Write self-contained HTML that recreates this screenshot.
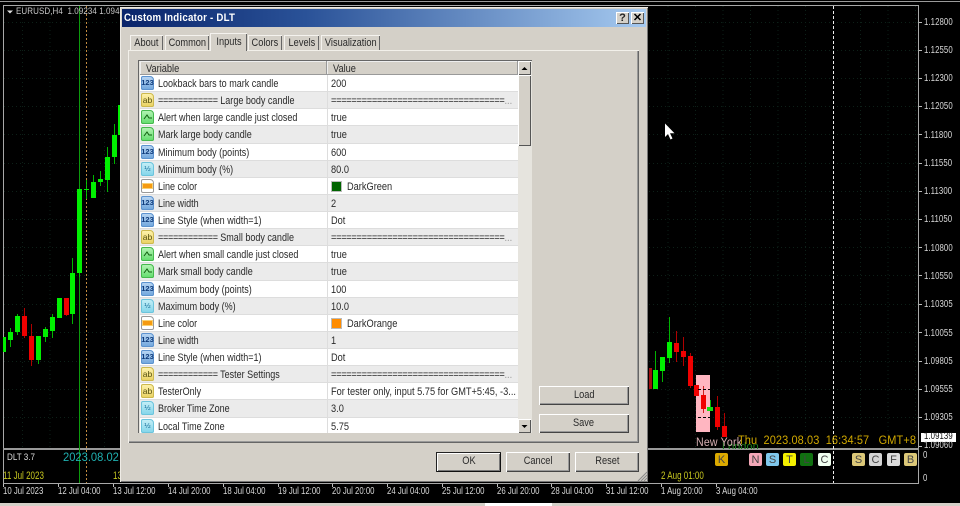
<!DOCTYPE html>
<html><head><meta charset="utf-8"><title>Custom Indicator - DLT</title>
<style>
html,body{margin:0;padding:0;background:#000}
body{width:960px;height:506px;position:relative;overflow:hidden;font-family:"Liberation Sans",sans-serif;font-size:11px;color:#222;filter:blur(.35px)}
.a{position:absolute;white-space:nowrap}
.l{transform-origin:0 50%}
.ax{position:absolute;left:924px;margin-top:1px;color:#d8d8d8;font-size:10px;line-height:10px;letter-spacing:.1px;transform:scaleX(.78);transform-origin:0 50%;white-space:nowrap}
.dt{position:absolute;top:487px;color:#d8d8d8;font-size:10px;line-height:10px;white-space:nowrap;transform:scaleX(.78);transform-origin:0 50%}
.y{position:absolute;color:#c8c820;font-size:11px;line-height:11px;white-space:nowrap;transform:scaleX(.73);transform-origin:0 50%}
.bt{position:absolute;top:453px;width:13px;height:13px;text-align:center;font-size:11px;line-height:14px;color:#444;border-radius:2px}
#dlg{position:absolute;left:120px;top:7px;width:528px;height:475px;background:#d4d0c8;box-shadow:inset 1px 1px 0 #efece6,inset -1px -1px 0 #777}
#tb{position:absolute;left:122px;top:9px;width:524px;height:18px;background:linear-gradient(90deg,#0a246a 0,#2a5298 35%,#a6caf0 100%)}
#tb b{position:absolute;left:2px;top:2px;color:#fff;font-size:11px;line-height:14px;letter-spacing:.25px;transform:scaleX(.88);transform-origin:0 50%;white-space:nowrap}
.cb{position:absolute;top:12px;width:13px;height:12px;background:#d4d0c8;box-shadow:inset 1px 1px 0 #fff,inset -1px -1px 0 #555;text-align:center;font:bold 11px/12px "Liberation Sans",sans-serif;color:#000}
.tab,.btn{display:flex;justify-content:center;white-space:nowrap}
.x{display:block;transform:scaleX(.84);flex:none}
.tab{position:absolute;top:35px;height:15px;background:#d4d0c8;box-shadow:inset 1px 1px 0 #f4f2ee,inset -1px 0 0 #666;line-height:17px;color:#2a2a2a;font-size:11px}
#panel{position:absolute;left:128px;top:50px;width:511px;height:393px;background:#d4d0c8;box-shadow:inset 1px 1px 0 #f2f0ea,inset -1px -1px 0 #666,inset -2px -2px 0 #999}
#list{position:absolute;left:138px;top:60px;width:394px;height:373px;background:#e6e4de;box-shadow:inset 1px 1px 0 #666;overflow:hidden}
.hd{position:absolute;top:1px;height:14px;background:#d4d0c8;box-shadow:inset -1px -1px 0 #999,inset 1px 1px 0 #eee;line-height:16px;color:#2a2a2a;font-size:11px;white-space:nowrap}
.hd span{display:block;transform:scaleX(.84);transform-origin:0 50%}
#rows{position:absolute;left:2px;top:15px;width:378px}
.r{position:relative;height:17.14px;line-height:19px;background:#fff;box-shadow:inset 0 -1px 0 #ddd;white-space:nowrap;overflow:hidden}
.r.g{background:#ebebeb}
.r s{text-decoration:none;position:absolute;left:18px;top:0;color:#2a2a2a;transform:scaleX(.82);transform-origin:0 50%}
.r u{text-decoration:none;position:absolute;left:191px;top:0;color:#2a2a2a;transform:scaleX(.84);transform-origin:0 50%}
.r i{position:absolute;left:187px;top:0;width:1px;height:17px;background:#ddd}
.e{letter-spacing:-.35px}
.d{color:#999;letter-spacing:0}
.sw{position:absolute;left:191px;top:3px;width:11px;height:11px;box-shadow:0 0 0 1px #bbb inset}
.ic{position:absolute;left:1px;top:1px;width:13px;height:14px;border-radius:2px 4px 2px 2px;font-size:7.5px;line-height:14px;text-align:center;font-weight:bold}
.n{background:linear-gradient(#bcd8f4,#6ea4dc);color:#103c7c;box-shadow:inset 0 0 0 1px #5d93cf}
.h{background:linear-gradient(#c8f0f8,#80d4ea);color:#1a6f9a;box-shadow:inset 0 0 0 1px #6cc4dc;font-weight:normal}
.t{background:linear-gradient(#fff4b0,#e8d060);color:#555010;box-shadow:inset 0 0 0 1px #cdb94f;font-size:8.5px;font-weight:normal}
.b{background:linear-gradient(#b8f5b8,#5fdc6a);box-shadow:inset 0 0 0 1px #46b84e}
.c{background:#fff;box-shadow:inset 0 0 0 1px #999}
.c:after{content:"";position:absolute;left:2px;top:5px;width:9px;height:4px;background:#f59a10;box-shadow:0 0 0 1px #f8d070}
.b svg{position:absolute;left:0;top:0}
.sb{position:absolute;left:518px;width:13px;background:#d4d0c8;box-shadow:inset 1px 1px 0 #fff,inset -1px -1px 0 #555}
.btn{position:absolute;background:#d4d0c8;box-shadow:inset 1px 1px 0 #fff,inset -1px -1px 0 #444,inset -2px -2px 0 #999;color:#2a2a2a;font-size:11px}
</style></head><body>

<svg class="a" style="left:0;top:0" width="960" height="506" viewBox="0 0 960 506">
<rect width="960" height="506" fill="#000"/>
<rect x="0" y="1" width="960" height="1" fill="#9a9a9a"/>
<g stroke="#0d2018" stroke-width="1" stroke-dasharray="1 3">
<path d="M22.5 6V449M50 6V449M104.500 6V449M668 6V449M695.500 6V449M723 6V449M750.500 6V449M778 6V449M805.500 6V449M860.500 6V449M888 6V449M915.500 6V449"/>
<path d="M4 22.500H119M4 50.500H119M4 78.500H119M4 106.500H119M4 134.500H119M4 163.500H119M4 191.500H119M4 219.500H119M4 247.500H119M4 275.500H119M4 304.500H119M4 332.500H119M4 361.500H119M4 389.500H119M4 417.500H119M649 22.500H918M649 50.500H918M649 78.500H918M649 106.500H918M649 134.500H918M649 163.500H918M649 191.500H918M649 219.500H918M649 247.500H918M649 275.500H918M649 304.500H918M649 332.500H918M649 361.500H918M649 389.500H918M649 417.500H918"/>
</g>
<!-- frame -->
<path d="M3.500 5.500H918.500V483.500H3.500Z" fill="none" stroke="#a8a8a8"/>
<rect x="3" y="448" width="916" height="2" fill="#999"/>
<g stroke="#bbb"><path d="M919 22.500h3M919 50.500h3M919 78.500h3M919 106.500h3M919 134.500h3M919 163.500h3M919 191.500h3M919 219.500h3M919 247.500h3M919 275.500h3M919 304.500h3M919 332.500h3M919 361.500h3M919 389.500h3M919 417.500h3M919 446.500h3"/>
<path d="M3.500 484v3M58.500 484v3M113.500 484v3M168.500 484v3M223.500 484v3M278.500 484v3M332.500 484v3M387.500 484v3M442.500 484v3M497.500 484v3M551.500 484v3M606.500 484v3M661.500 484v3M716.500 484v3"/></g>
<!-- vlines -->
<path d="M79.500 6V483" stroke="#0c9a0c"/>
<path d="M86.500 6V483" stroke="#c08a40" stroke-dasharray="2 2"/>
<path d="M833.500 6V483" stroke="#eee" stroke-dasharray="3 2"/>
<!-- wicks -->
<g stroke="#00c800" stroke-width="1" opacity=".9">
<path d="M10.500 328V347M17.500 314V335M38.500 336V364M45.500 327V342M52.500 314V338M72.500 258V324M79.500 189V277M86.500 180V199M93.500 175V198M100.500 171V186M107.500 147V192M114.500 124V164"/>
<path d="M655.500 351V389M662.500 357V382M669.500 317V363M710.500 400V410"/></g>
<g stroke="#b00000" stroke-width="1">
<path d="M24.500 308V338M31.500 324V366M66.500 298V316M676.500 331V362M683.500 337V366M690.500 353V388M717.500 396V430M724.500 413V437"/></g>
<g fill="#00f000">
<rect x="3" y="337" width="3" height="15"/><rect x="8" y="332" width="5" height="8"/><rect x="15" y="316" width="5" height="16"/><rect x="36" y="336" width="5" height="24"/><rect x="43" y="329" width="5" height="8"/><rect x="50" y="317" width="5" height="14"/><rect x="57" y="298" width="5" height="20"/><rect x="70" y="273" width="5" height="41"/><rect x="77" y="189" width="5" height="84"/><rect x="84" y="189" width="5" height="1"/><rect x="91" y="182" width="5" height="16"/><rect x="98" y="179" width="5" height="3"/><rect x="105" y="157" width="5" height="23"/><rect x="112" y="135" width="5" height="22"/><rect x="118" y="105" width="2" height="30"/>
<rect x="653" y="370" width="5" height="19"/><rect x="660" y="357" width="5" height="14"/><rect x="667" y="342" width="5" height="16"/>
</g>
<g fill="#f00000">
<rect x="22" y="316" width="5" height="20"/><rect x="29" y="336" width="5" height="24"/><rect x="64" y="298" width="5" height="17"/>
<rect x="649" y="368" width="3" height="21" fill="#a01010"/>
<rect x="674" y="343" width="5" height="9"/><rect x="681" y="351" width="5" height="6"/><rect x="688" y="356" width="5" height="30"/>
</g>
<rect x="696" y="375" width="14" height="57" fill="#ffb6c1"/>
<path d="M703.500 386V413" stroke="#d02020"/>
<g fill="#f00000"><rect x="694" y="385" width="5" height="11"/><rect x="701" y="395" width="5" height="14"/><rect x="715" y="407" width="5" height="20"/><rect x="722" y="426" width="5" height="11"/></g>
<rect x="707" y="407" width="6" height="4" fill="#10e010"/>
<path d="M698 389.500H711M698 417.500H711" stroke="#000" stroke-dasharray="3 2"/>
<!-- triangle -->
<path d="M7 10.500h6l-3 3z" fill="#ddd"/>
<!-- cursor -->
<path d="M665 123.500V137l3-3 2.500 5.500 2-1-2.500-5.300h4.500z" fill="#fff"/>
<!-- price box -->
<rect x="921" y="433" width="35" height="9" fill="#fff"/>
</svg>

<div class="a l" style="left:16px;top:7px;color:#c8c8c8;font-size:9.5px;line-height:10px;letter-spacing:.1px;transform:scaleX(.84)">EURUSD,H4&nbsp; 1.09234 1.094</div>

<div class="ax" style="top:17px">1.12800</div><div class="ax" style="top:45px">1.12550</div><div class="ax" style="top:73px">1.12300</div><div class="ax" style="top:101px">1.12050</div><div class="ax" style="top:130px">1.11800</div><div class="ax" style="top:158px">1.11550</div><div class="ax" style="top:186px">1.11300</div><div class="ax" style="top:214px">1.11050</div><div class="ax" style="top:243px">1.10800</div><div class="ax" style="top:271px">1.10550</div><div class="ax" style="top:299px">1.10305</div><div class="ax" style="top:328px">1.10055</div><div class="ax" style="top:356px">1.09805</div><div class="ax" style="top:384px">1.09555</div><div class="ax" style="top:412px">1.09305</div>
<div class="ax" style="top:431px;color:#111">1.09139</div>
<div class="ax" style="top:440px">1.09060</div>
<div class="ax" style="top:450px;left:923px">0</div><div class="ax" style="top:473px;left:923px">0</div>

<div class="dt" style="left:3px">10 Jul 2023</div><div class="dt" style="left:58px">12 Jul 04:00</div><div class="dt" style="left:113px">13 Jul 12:00</div><div class="dt" style="left:168px">14 Jul 20:00</div><div class="dt" style="left:223px">18 Jul 04:00</div><div class="dt" style="left:278px">19 Jul 12:00</div><div class="dt" style="left:332px">20 Jul 20:00</div><div class="dt" style="left:387px">24 Jul 04:00</div><div class="dt" style="left:442px">25 Jul 12:00</div><div class="dt" style="left:497px">26 Jul 20:00</div><div class="dt" style="left:551px">28 Jul 04:00</div><div class="dt" style="left:606px">31 Jul 12:00</div><div class="dt" style="left:661px">1 Aug 20:00</div><div class="dt" style="left:716px">3 Aug 04:00</div>

<div class="a l" style="left:7px;top:452px;color:#ddd;font-size:9.5px;line-height:12px;transform:scaleX(.85)">DLT 3.7</div>
<div class="a l" style="left:63px;top:450px;color:#1fb0b0;font-size:12px;line-height:14px;transform:scaleX(.93)">2023.08.02</div>
<div class="y" style="left:3px;top:471px">11 Jul 2023</div>
<div class="y" style="left:113px;top:471px">13</div>
<div class="y" style="left:661px;top:471px">2 Aug 01:00</div>

<div class="a" style="left:722px;top:441px;height:8px;overflow:hidden;color:#1c7a1c;font-size:11px;line-height:13px">London</div>
<div class="a l" style="left:696px;top:436px;color:#d8b0b4;font-size:11.500px;line-height:14px;letter-spacing:.2px;transform:scaleX(.92)">New York</div>
<div class="a l" style="left:738px;top:434px;color:#d0a800;font-size:11.500px;line-height:14px;white-space:pre;letter-spacing:.1px;transform:scaleX(.955)">Thu  2023.08.03  16:34:57   GMT+8</div>

<div class="bt" style="left:715px;background:#dcaa00">K</div>
<div class="bt" style="left:749px;background:#f4a8b8">N</div>
<div class="bt" style="left:766px;background:#80c8ec">S</div>
<div class="bt" style="left:783px;background:#f4f000">T</div>
<div class="bt" style="left:800px;background:#107010">L</div>
<div class="bt" style="left:818px;background:#f0fff0">C</div>
<div class="bt" style="left:852px;background:#dcc878">S</div>
<div class="bt" style="left:869px;background:#d4d4d4">C</div>
<div class="bt" style="left:887px;background:#dcdcdc">F</div>
<div class="bt" style="left:904px;background:#dcc878">B</div>

<!-- bottom strip -->
<div class="a" style="left:0;top:503px;width:960px;height:3px;background:#d4d0c8"></div>
<div class="a" style="left:485px;top:503px;width:67px;height:3px;background:#fff"></div>

<!-- dialog -->
<div id="dlg"></div>
<div id="tb"><b>Custom Indicator - DLT</b></div>
<div class="cb" style="left:616px;color:#222">?</div>
<div class="cb" style="left:631px">✕</div>

<div id="panel"></div>
<div class="tab" style="left:130px;width:33px"><span class="x">About</span></div>
<div class="tab" style="left:165px;width:44px"><span class="x">Common</span></div>
<div class="tab" style="left:210px;width:37px;top:33px;height:18px;line-height:18px"><span class="x">Inputs</span></div>
<div class="tab" style="left:248px;width:34px"><span class="x">Colors</span></div>
<div class="tab" style="left:284px;width:35px"><span class="x">Levels</span></div>
<div class="tab" style="left:321px;width:59px"><span class="x">Visualization</span></div>

<div id="list">
<div class="hd" style="left:2px;width:187px;padding-left:6px;box-sizing:border-box"><span>Variable</span></div>
<div class="hd" style="left:189px;width:191px;padding-left:6px;box-sizing:border-box"><span>Value</span></div>
<div id="rows">
<div class="r"><span class="ic n">123</span><s>Lookback bars to mark candle</s><i></i><u>200</u></div>
<div class="r g"><span class="ic t">ab</span><s><span class="e">============</span> Large body candle</s><i></i><u class="e">==================================<span class="d">...</span></u></div>
<div class="r"><span class="ic b"><svg width="13" height="13"><path d="M3 9l3-4 2 3h3" fill="none" stroke="#106010"/></svg></span><s>Alert when large candle just closed</s><i></i><u>true</u></div>
<div class="r g"><span class="ic b"><svg width="13" height="13"><path d="M3 9l3-4 2 3h3" fill="none" stroke="#106010"/></svg></span><s>Mark large body candle</s><i></i><u>true</u></div>
<div class="r"><span class="ic n">123</span><s>Minimum body (points)</s><i></i><u>600</u></div>
<div class="r g"><span class="ic h">½</span><s>Minimum body (%)</s><i></i><u>80.0</u></div>
<div class="r"><span class="ic c"></span><s>Line color</s><i></i><span class="sw" style="background:#006400"></span><u style="left:207px">DarkGreen</u></div>
<div class="r g"><span class="ic n">123</span><s>Line width</s><i></i><u>2</u></div>
<div class="r"><span class="ic n">123</span><s>Line Style (when width=1)</s><i></i><u>Dot</u></div>
<div class="r g"><span class="ic t">ab</span><s><span class="e">============</span> Small body candle</s><i></i><u class="e">==================================<span class="d">...</span></u></div>
<div class="r"><span class="ic b"><svg width="13" height="13"><path d="M3 9l3-4 2 3h3" fill="none" stroke="#106010"/></svg></span><s>Alert when small candle just closed</s><i></i><u>true</u></div>
<div class="r g"><span class="ic b"><svg width="13" height="13"><path d="M3 9l3-4 2 3h3" fill="none" stroke="#106010"/></svg></span><s>Mark small body candle</s><i></i><u>true</u></div>
<div class="r"><span class="ic n">123</span><s>Maximum body (points)</s><i></i><u>100</u></div>
<div class="r g"><span class="ic h">½</span><s>Maximum body (%)</s><i></i><u>10.0</u></div>
<div class="r"><span class="ic c"></span><s>Line color</s><i></i><span class="sw" style="background:#ff8c00"></span><u style="left:207px">DarkOrange</u></div>
<div class="r g"><span class="ic n">123</span><s>Line width</s><i></i><u>1</u></div>
<div class="r"><span class="ic n">123</span><s>Line Style (when width=1)</s><i></i><u>Dot</u></div>
<div class="r g"><span class="ic t">ab</span><s><span class="e">============</span> Tester Settings</s><i></i><u class="e">==================================<span class="d">...</span></u></div>
<div class="r"><span class="ic t">ab</span><s>TesterOnly</s><i></i><u>For tester only, input 5.75 for GMT+5:45, -3...</u></div>
<div class="r g"><span class="ic h">½</span><s>Broker Time Zone</s><i></i><u>3.0</u></div>
<div class="r"><span class="ic h">½</span><s>Local Time Zone</s><i></i><u>5.75</u></div>
</div>
</div>
<div class="sb" style="top:61px;height:14px"><svg width="13" height="14"><path d="M3.500 9h6l-3-3z" fill="#000"/></svg></div>
<div class="sb" style="top:75px;height:71px"></div>
<div class="sb" style="top:419px;height:14px"><svg width="13" height="14"><path d="M3.500 6h6l-3 3z" fill="#000"/></svg></div>

<div class="btn" style="left:539px;top:386px;width:90px;height:19px;line-height:18px"><span class="x">Load</span></div>
<div class="btn" style="left:539px;top:414px;width:90px;height:19px;line-height:18px"><span class="x">Save</span></div>
<div class="btn" style="left:436px;top:452px;width:65px;height:20px;line-height:19px;box-shadow:inset 1px 1px 0 #222,inset -1px -1px 0 #111,inset 2px 2px 0 #fff,inset -2px -2px 0 #777"><span class="x">OK</span></div>
<div class="btn" style="left:506px;top:452px;width:64px;height:20px;line-height:19px"><span class="x">Cancel</span></div>
<div class="btn" style="left:575px;top:452px;width:64px;height:20px;line-height:19px"><span class="x">Reset</span></div>
<svg class="a" style="left:636px;top:470px" width="12" height="12"><path d="M2 11L11 2M5 11L11 5M8 11L11 8" stroke="#888"/></svg>
</body></html>
